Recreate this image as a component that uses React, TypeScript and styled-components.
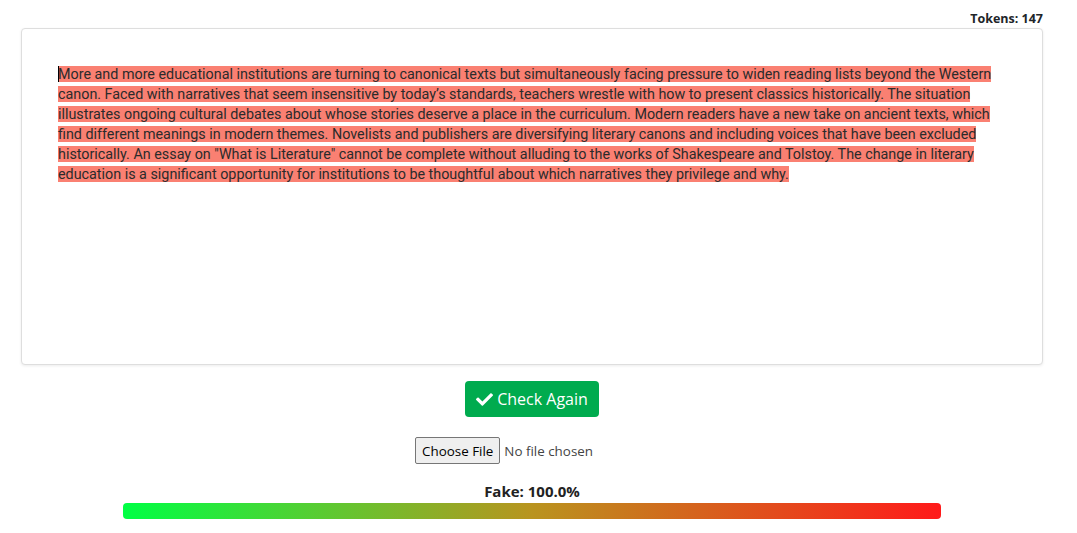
import { styled, createGlobalStyle } from 'styled-components';

const GlobalStyle = createGlobalStyle`
  html, body {
    margin: 0;
    padding: 0;
    background: #fff;
  }
  body {
    font-family: 'Segoe UI', 'Open Sans', 'Liberation Sans', sans-serif;
    color: #212529;
  }
`;

const TEXT =
  'More and more educational institutions are turning to canonical texts but simultaneously facing pressure to widen reading lists beyond the Western canon. Faced with narratives that seem insensitive by today\u2019s standards, teachers wrestle with how to present classics historically. The situation illustrates ongoing cultural debates about whose stories deserve a place in the curriculum. Modern readers have a new take on ancient texts, which find different meanings in modern themes. Novelists and publishers are diversifying literary canons and including voices that have been excluded historically. An essay on "What is Literature" cannot be complete without alluding to the works of Shakespeare and Tolstoy. The change in literary education is a significant opportunity for institutions to be thoughtful about which narratives they privilege and why.';

export default function App() {
  return (
    <>
      <GlobalStyle />
      <Page>
        <Tokens>Tokens: 147</Tokens>
        <Editor>
          <Paragraph>
            <Highlight>
              <Caret />
              {TEXT}
            </Highlight>
          </Paragraph>
        </Editor>
        <Actions>
          <CheckButton>
            <CheckIcon viewBox="0 0 512 512">
              <path d="M173.9 439.4l-166.4-166.4c-10-10-10-26.2 0-36.2l36.2-36.2c10-10 26.2-10 36.2 0L192 312.7 432.1 72.6c10-10 26.2-10 36.2 0l36.2 36.2c10 10 10 26.2 0 36.2L210.1 439.4c-10 10-26.2 10-36.2 0z" />
            </CheckIcon>
            Check Again
          </CheckButton>
          <FileRow>
            <FileButton>Choose File</FileButton>
            <FileLabel>No file chosen</FileLabel>
          </FileRow>
          <Score>Fake: 100.0%</Score>
          <Meter />
        </Actions>
      </Page>
    </>
  );
}

const Page = styled.div`
  width: 1022px;
  margin-left: 21px;
  display: flex;
  flex-direction: column;
`;

const Tokens = styled.div`
  align-self: flex-end;
  margin-top: 10px;
  height: 18px;
  font-size: 12.5px;
  font-weight: 700;
  line-height: 18px;
  color: #212529;
`;

const Editor = styled.div`
  box-sizing: border-box;
  height: 337px;
  border: 1px solid #dedede;
  border-radius: 4px;
  box-shadow: 0 1px 3px rgba(0, 0, 0, 0.08);
  padding: 35px 36px;
  background: #fff;
`;

const Paragraph = styled.p`
  margin: 0;
  font-family: Roboto, 'Liberation Sans', sans-serif;
  font-size: 14.33px;
  line-height: 20px;
  color: #2b2b2b;
`;

const Caret = styled.span`
  display: inline-block;
  width: 1px;
  height: 16px;
  margin-right: -1px;
  vertical-align: -3px;
  background: #000;
`;

const Highlight = styled.span`
  background: #fa8072;
`;

const Actions = styled.div`
  display: flex;
  flex-direction: column;
  align-items: center;
`;

const CheckButton = styled.button`
  margin-top: 16px;
  height: 36px;
  padding: 0 11px;
  display: flex;
  align-items: center;
  gap: 4px;
  border: none;
  border-radius: 4px;
  background: #00ab4e;
  color: #fff;
  font-family: 'Segoe UI', 'Open Sans', 'Liberation Sans', sans-serif;
  font-size: 16px;
`;

const CheckIcon = styled.svg`
  width: 17px;
  height: 17px;
  fill: #fff;
`;

const FileRow = styled.div`
  width: 234px;
  margin-top: 20px;
  display: flex;
  align-items: center;
  gap: 4px;
  font-family: 'Segoe UI', 'Open Sans', 'Liberation Sans', sans-serif;
  font-size: 13.4px;
`;

const FileButton = styled.button`
  height: 27px;
  padding: 0 6px;
  border: 1px solid #767676;
  border-radius: 2px;
  background: #efefef;
  color: #000;
  font-family: inherit;
  font-size: 13.4px;
`;

const FileLabel = styled.span`
  color: #444;
  white-space: nowrap;
`;

const Score = styled.div`
  margin-top: 17px;
  font-size: 15px;
  font-weight: 700;
  line-height: 20px;
  color: #222;
`;

const Meter = styled.div`
  width: 80%;
  height: 16px;
  margin-top: 2px;
  border-radius: 4px;
  background: linear-gradient(to right, #00ff44 0%, #b9941f 50%, #ff1a1a 100%);
`;
